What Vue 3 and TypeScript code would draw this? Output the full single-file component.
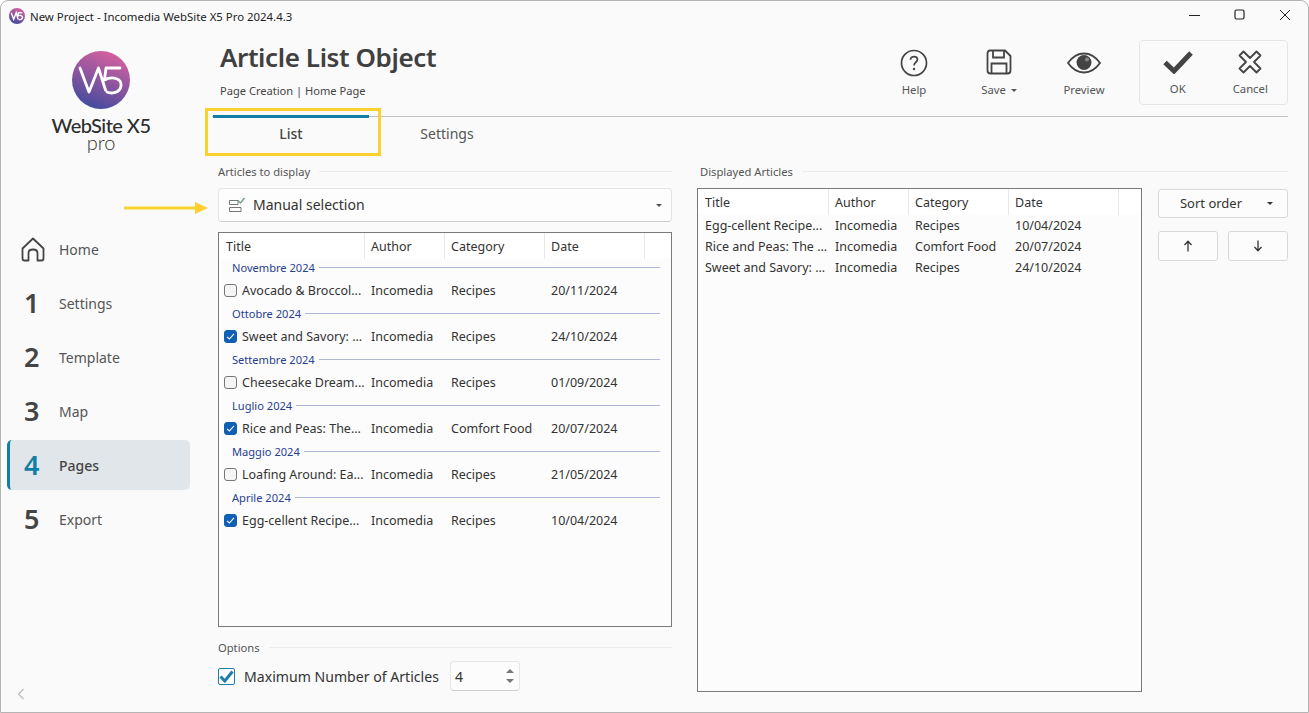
<script setup lang="ts">
const nav = [
  { n: '', label: 'Home' },
  { n: '1', label: 'Settings' },
  { n: '2', label: 'Template' },
  { n: '3', label: 'Map' },
  { n: '4', label: 'Pages', active: true },
  { n: '5', label: 'Export' },
]
const groups = [
  { month: 'Novembre 2024', title: 'Avocado & Broccol...', cat: 'Recipes', date: '20/11/2024', on: false },
  { month: 'Ottobre 2024', title: 'Sweet and Savory: ...', cat: 'Recipes', date: '24/10/2024', on: true },
  { month: 'Settembre 2024', title: 'Cheesecake Dream...', cat: 'Recipes', date: '01/09/2024', on: false },
  { month: 'Luglio 2024', title: 'Rice and Peas: The...', cat: 'Comfort Food', date: '20/07/2024', on: true },
  { month: 'Maggio 2024', title: 'Loafing Around: Ea...', cat: 'Recipes', date: '21/05/2024', on: false },
  { month: 'Aprile 2024', title: 'Egg-cellent Recipe...', cat: 'Recipes', date: '10/04/2024', on: true },
]
const shown = [
  { title: 'Egg-cellent Recipe...', cat: 'Recipes', date: '10/04/2024' },
  { title: 'Rice and Peas: The ...', cat: 'Comfort Food', date: '20/07/2024' },
  { title: 'Sweet and Savory: ...', cat: 'Recipes', date: '24/10/2024' },
]
</script>

<template>
  <div class="window">
    <header class="titlebar">
      <svg class="app-icon" viewBox="0 0 58 58">
        <defs>
          <linearGradient id="g1" x1="0.7" y1="0" x2="0.3" y2="1">
            <stop offset="0" stop-color="#d9619f" />
            <stop offset="1" stop-color="#3f4b9e" />
          </linearGradient>
        </defs>
        <circle cx="29" cy="29" r="29" fill="url(#g1)" />
        <path d="M8 17 17 41 26 17 33 41M48 17H34L32.500 29C40 25 50 27 49 35 48 42 39 43 35 41" fill="none" stroke="#fff" stroke-width="5" />
      </svg>
      <span class="title-text">New Project - Incomedia WebSite X5 Pro 2024.4.3</span>
      <div class="winctl">
        <svg width="12" height="12" viewBox="0 0 12 12"><path d="M0 6.500H11" stroke="#222" stroke-width="1.200" /></svg>
        <svg width="12" height="12" viewBox="0 0 12 12"><rect x="1" y="1" width="9" height="9" rx="1.500" fill="none" stroke="#222" stroke-width="1.200" /></svg>
        <svg width="12" height="12" viewBox="0 0 12 12"><path d="M1 1 11 11M11 1 1 11" stroke="#222" stroke-width="1" /></svg>
      </div>
    </header>

    <div class="body">
      <aside class="sidebar">
        <div class="logo">
          <svg class="logo-mark" viewBox="0 0 58 58">
            <defs>
              <linearGradient id="g2" x1="0.7" y1="0" x2="0.3" y2="1">
                <stop offset="0" stop-color="#d9619f" />
                <stop offset="1" stop-color="#3f4b9e" />
              </linearGradient>
            </defs>
            <circle cx="29" cy="29" r="29" fill="url(#g2)" />
            <path d="M8 17 17 41 26.500 17 33.500 39M48 17H34L32.500 29C40 25 50 27 49 35 48 42 39 43 35 41" fill="none" stroke="#fff" stroke-width="2.800" stroke-linecap="round" stroke-linejoin="round" />
          </svg>
          <div class="logo-name">WebSite X5</div>
          <div class="logo-pro">pro</div>
        </div>
        <nav class="nav">
          <div v-for="item in nav" :key="item.label" class="nav-item" :class="{ active: item.active }">
            <span class="nav-num">
              <svg v-if="!item.n" class="home" width="24" height="25" viewBox="0 0 24 25">
                <path d="M1.500 11.500 12 1.500 22.500 11.500V21.500Q22.500 23.500 20.500 23.500H16.500V16Q16.500 12.500 12 12.500 7.500 12.500 7.500 16V23.500H3.500Q1.500 23.500 1.500 21.500Z" fill="none" stroke="#444" stroke-width="1.800" stroke-linejoin="round" />
              </svg>
              <template v-else>{{ item.n }}</template>
            </span>
            <span class="nav-label">{{ item.label }}</span>
          </div>
        </nav>
        <svg class="collapse" width="8" height="12" viewBox="0 0 8 12"><path d="M6.500 1 1.500 6 6.500 11" fill="none" stroke="#bdbdbd" stroke-width="1.300" /></svg>
      </aside>

      <main class="main">
        <div class="head">
          <div class="head-text">
            <h1>Article List Object</h1>
            <p>Page Creation | Home Page</p>
          </div>
          <div class="tools">
            <div class="tool help">
              <svg width="28" height="28" viewBox="0 0 28 28"><circle cx="14" cy="14" r="12.500" fill="none" stroke="#444" stroke-width="1.700" /><path d="M10.500 10.800C10.500 8.800 12 7.600 14 7.600 16 7.600 17.500 8.900 17.500 10.600 17.500 13.200 14 13.400 14 16.500" fill="none" stroke="#444" stroke-width="1.700" /><circle cx="14" cy="20" r="1.200" fill="#444" /></svg>
              <span>Help</span>
            </div>
            <div class="tool save">
              <svg width="26" height="26" viewBox="0 0 26 26"><path d="M4 1.500H19L24.500 7V21.500Q24.500 24.500 21.500 24.500H4.500Q1.500 24.500 1.500 21.500V4.500Q1.500 1.500 4 1.500Z" fill="none" stroke="#444" stroke-width="1.800" stroke-linejoin="round" /><path d="M7 2V8.500H18V2M5.500 24V14.500H20.500V24" fill="none" stroke="#444" stroke-width="1.800" /></svg>
              <span>Save <i class="caret"></i></span>
            </div>
            <div class="tool preview">
              <svg width="34" height="22" viewBox="0 0 34 22"><path d="M1 11C6 4 11 1.500 17 1.500S28 4 33 11C28 18 23 20.500 17 20.500S6 18 1 11Z" fill="none" stroke="#444" stroke-width="1.800" /><circle cx="17" cy="10.500" r="7.500" fill="#444" /><circle cx="20" cy="7.500" r="2" fill="#888" /></svg>
              <span>Preview</span>
            </div>
            <div class="confirm">
              <div class="tool ok">
                <svg width="30" height="24" viewBox="0 0 30 24"><path d="M2 12.500 11 21 28 3" fill="none" stroke="#444" stroke-width="5" /></svg>
                <span>OK</span>
              </div>
              <div class="tool cancel">
                <svg width="24" height="24" viewBox="0 0 24 24"><path d="M5.500 1.500 12 8 18.500 1.500 22.500 5.500 16 12 22.500 18.500 18.500 22.500 12 16 5.500 22.500 1.500 18.500 8 12 1.500 5.500Z" fill="none" stroke="#444" stroke-width="1.800" stroke-linejoin="round" /></svg>
                <span>Cancel</span>
              </div>
            </div>
          </div>
        </div>

        <div class="tabs">
          <div class="tab on">List</div>
          <div class="tab">Settings</div>
        </div>

        <div class="columns">
          <section class="left">
            <div class="legend"><span>Articles to display</span><i></i></div>
            <div class="select">
              <svg width="18" height="16" viewBox="0 0 18 16"><path d="M1.500 3.500H10V7.500H1.500ZM1.500 10.500H13V14.500H1.500Z" fill="none" stroke="#777" stroke-width="1" /><path d="M10 3.500 12.500 6 16.500 1" fill="none" stroke="#7d9d8a" stroke-width="1.500" /></svg>
              <span class="select-text">Manual selection</span>
              <i class="caret"></i>
            </div>
            <div class="list left-list">
              <div class="cols">
                <div class="c1">Title</div><div class="c2">Author</div><div class="c3">Category</div><div class="c4">Date</div>
              </div>
              <template v-for="g in groups" :key="g.month">
                <div class="group"><span>{{ g.month }}</span><i></i></div>
                <div class="row">
                  <div class="c1 check-cell">
                    <span class="cb" :class="{ checked: g.on }">
                      <svg v-if="g.on" width="9" height="9" viewBox="0 0 9 9"><path d="M1 4.800 3.400 7 8 1.800" fill="none" stroke="#fff" stroke-width="1.100" /></svg>
                    </span>
                    <span class="nowrap">{{ g.title }}</span>
                  </div>
                  <div class="c2">Incomedia</div><div class="c3">{{ g.cat }}</div><div class="c4">{{ g.date }}</div>
                </div>
              </template>
            </div>
            <div class="legend options"><span>Options</span><i></i></div>
            <div class="max-row">
              <span class="big-cb">
                <svg width="15" height="15" viewBox="0 0 15 15"><path d="M1.500 7.500 5.800 12 13.500 2.500" fill="none" stroke="#1f7ea6" stroke-width="3" /></svg>
              </span>
              <span class="max-label">Maximum Number of Articles</span>
              <div class="spin">
                <span>4</span>
                <div class="arrows"><i class="up"></i><i class="down"></i></div>
              </div>
            </div>
          </section>

          <section class="right">
            <div class="legend shifted"><span>Displayed Articles</span><i></i></div>
            <div class="right-body">
              <div class="list right-list">
                <div class="cols">
                  <div class="d1">Title</div><div class="d2">Author</div><div class="d3">Category</div><div class="d4">Date</div>
                </div>
                <div v-for="s in shown" :key="s.date" class="row small">
                  <div class="d1 nowrap">{{ s.title }}</div><div class="d2">Incomedia</div><div class="d3">{{ s.cat }}</div><div class="d4">{{ s.date }}</div>
                </div>
              </div>
              <div class="side-btns">
                <div class="btn sort"><span>Sort order</span><i class="caret dark"></i></div>
                <div class="arrow-btns">
                  <div class="btn">
                    <svg width="10" height="12" viewBox="0 0 10 12"><path d="M5 11.500V1.500M1.500 5 5 1.200 8.500 5" fill="none" stroke="#333" stroke-width="1.300" /></svg>
                  </div>
                  <div class="btn">
                    <svg width="10" height="12" viewBox="0 0 10 12"><path d="M5 .5V10.500M1.500 7 5 10.800 8.500 7" fill="none" stroke="#333" stroke-width="1.300" /></svg>
                  </div>
                </div>
              </div>
            </div>
          </section>
        </div>
      </main>
    </div>

    <div class="mark-box"></div>
    <svg class="mark-arrow" width="84" height="12" viewBox="0 0 84 12"><path d="M0 6H72" stroke="#fbd12f" stroke-width="3" /><path d="M71 0 84 6 71 12Z" fill="#fbd12f" /></svg>
  </div>
</template>

<style>
html, body { margin: 0; background: #fff; }
</style>

<style scoped>
.window {
  position: relative;
  width: 1309px;
  height: 713px;
  box-sizing: border-box;
  overflow: hidden;
  display: flex;
  flex-direction: column;
  background: #fafafa;
  border: 1px solid #b4b4b4;
  border-radius: 8px 8px 0 0;
  color: #444;
  font-family: "Noto Sans", "Open Sans", sans-serif;
  font-size: 13px;
}
.titlebar {
  height: 30px;
  flex: none;
  display: flex;
  align-items: center;
  padding: 0 0 0 8px;
  box-sizing: border-box;
}
.app-icon { width: 16px; height: 16px; }
.title-text { margin-left: 5px; font-size: 11.400px; color: #222; }
.winctl { margin: -2px 0 0 auto; display: flex; gap: 33px; padding-right: 17px; align-items: center; }

.body { flex: 1; display: flex; min-height: 0; }
.sidebar {
  width: 206px;
  flex: none;
  display: flex;
  flex-direction: column;
  padding-left: 6px;
  box-sizing: border-box;
}
.logo {
  width: 190px;
  height: 180px;
  display: flex;
  flex-direction: column;
  align-items: center;
  padding: 20px 0 0 0;
  box-sizing: border-box;
  margin-left: 1px;
}
.logo-mark { width: 58px; height: 58px; flex: none; margin-left: -4px; }
.logo-name {
  font-family: Lato, sans-serif;
  font-weight: 500;
  font-size: 20px;
  line-height: 20px;
  letter-spacing: -0.550px;
  color: #2e2e2e;
  margin: 6px 0 0 -4px;
}
.logo-pro {
  font-family: Lato, sans-serif;
  font-weight: 300;
  font-size: 20px;
  line-height: 14px;
  color: #333;
  margin: 0 0 0 -4px;
}
.nav { display: flex; flex-direction: column; gap: 4px; margin-top: 13px; }
.nav-item {
  width: 183px;
  height: 50px;
  display: flex;
  align-items: center;
  box-sizing: border-box;
  border-radius: 5px;
  border-left: 3px solid transparent;
}
.nav-item.active { background: #e1e6ea; border-left-color: #117ea6; }
.nav-num {
  width: 46px;
  padding-left: 14px;
  box-sizing: border-box;
  font-size: 27px;
  font-weight: 600;
  color: #444;
  line-height: 30px;
  display: flex;
  align-items: center;
  flex: none;
}
.home { margin-left: -3px; flex: none; }
.nav-item.active .nav-num { color: #117ea6; }
.nav-label { font-size: 14px; color: #555; margin-left: 3px; }
.nav-item.active .nav-label { color: #444; font-weight: 500; }
.collapse { margin: auto 0 12px 10px; }

.main {
  flex: 1;
  min-width: 0;
  display: flex;
  flex-direction: column;
  padding: 0 20px 0 5px;
}
.head { height: 86px; flex: none; display: flex; justify-content: space-between; box-sizing: border-box; border-bottom: 1px solid #c2c2c2; }
.head-text { padding: 8px 0 0 8px; }
h1 { margin: 0; font-size: 26px; line-height: 37px; font-weight: 600; color: #404040; letter-spacing: -0.400px; }
.head-text p { margin: 7px 0 0; font-size: 11.100px; line-height: 16px; color: #444; }
.tools { display: flex; align-items: flex-start; padding-top: 9px; }
.tool {
  display: flex;
  flex-direction: column;
  align-items: center;
  font-size: 11.300px;
  color: #555;
  height: 64px;
  box-sizing: border-box;
}
.tool svg { flex: none; }
.tool span { line-height: 16px; white-space: nowrap; }
.help { width: 60px; padding-top: 9px; margin-right: 25px; gap: 5px; }
.save { width: 60px; padding-top: 9px; margin-right: 25px; gap: 7px; }
.preview { width: 60px; padding-top: 12px; margin-right: 25px; gap: 8px; }
.confirm {
  display: flex;
  width: 149px;
  height: 65px;
  box-sizing: border-box;
  border: 1px solid #e6e6e6;
  border-radius: 4px;
  padding: 0 2px 0 0;
  justify-content: space-between;
}
.ok { width: 76px; padding-top: 9px; gap: 7px; }
.cancel { width: 70px; padding-top: 9px; gap: 7px; }

.caret {
  display: inline-block;
  width: 0;
  height: 0;
  border-left: 3px solid transparent;
  border-right: 3px solid transparent;
  border-top: 3px solid #555;
  vertical-align: middle;
  margin-left: 2px;
}

.tabs { display: flex; height: 48px; flex: none; margin-top: -2px; padding-left: 1px; }
.tab {
  width: 156px;
  height: 31px;
  display: flex;
  align-items: center;
  justify-content: center;
  font-size: 14px;
  color: #555;
  border-top: 3px solid transparent;
  box-sizing: content-box;
}
.tab.on { border-top-color: #117ea6; font-weight: 500; color: #444; }

.columns { flex: 1; min-height: 0; display: flex; padding: 0 0 20px 6px; gap: 25px; }
.left { width: 454px; flex: none; display: flex; flex-direction: column; }
.right { flex: 1; min-width: 0; display: flex; flex-direction: column; }
.legend { display: flex; align-items: center; gap: 9px; height: 16px; font-size: 11.200px; color: #555; flex: none; }
.legend.shifted { padding-left: 3px; }
.legend span { white-space: nowrap; }
.legend i { flex: 1; height: 1px; background: #ececec; }
.select {
  height: 34px;
  flex: none;
  margin-top: 9px;
  box-sizing: border-box;
  background: #fdfdfd;
  border: 1px solid #e4e4e4;
  border-bottom-color: #cfcfcf;
  border-radius: 4px;
  display: flex;
  align-items: center;
  padding: 0 9px;
}
.select-text { margin: -2px 0 0 7px; font-size: 14px; color: #333; }
.select .caret { margin-left: auto; }
.list { background: #fff; border: 1px solid #7a7a7a; box-sizing: border-box; font-size: 12.500px; color: #333; }
.left-list { height: 395px; flex: none; margin-top: 10px; background: #fcfcfc; }
.cols { display: flex; height: 26px; background: #fff; align-items: flex-start; color: #333; }
.left-list .cols { margin-bottom: -3px; }
.cols > div { height: 26px; line-height: 28px; padding-left: 6px; box-sizing: border-box; border-right: 1px solid #e8e8e8; }
.cols > .c1, .cols > .d1, .row > .d1 { padding-left: 7px; }
.c1 { width: 146px; flex: none; }
.c2 { width: 80px; flex: none; }
.c3 { width: 100px; flex: none; }
.c4 { width: 100px; flex: none; }
.row { display: flex; height: 23px; align-items: center; }
.row > div { padding-left: 6px; box-sizing: border-box; white-space: nowrap; overflow: hidden; }
.row > .check-cell { padding-left: 5px; }
.group { display: flex; align-items: center; gap: 4px; height: 23px; margin: 0 11px 0 13px; font-size: 11.100px; color: #27408f; position: relative; }
.group i { flex: 1; height: 1px; background: #aeb7d6; }
.check-cell { display: flex; align-items: center; gap: 5px; }
.nowrap { white-space: nowrap; overflow: hidden; }
.cb {
  width: 13px;
  height: 13px;
  flex: none;
  box-sizing: border-box;
  border: 1px solid #777;
  border-radius: 3px;
  background: #f5f5f5;
  display: flex;
  align-items: center;
  justify-content: center;
}
.cb.checked { background: #0f5fb4; border-color: #0f5fb4; }
.options { margin-top: 12px; }
.max-row { display: flex; align-items: center; margin-top: 3px; height: 36px; flex: none; }
.big-cb {
  width: 17px;
  height: 17px;
  box-sizing: border-box;
  border: 1px solid #1f7ea6;
  border-radius: 2px;
  background: #fff;
  display: flex;
  align-items: center;
  justify-content: center;
}
.max-label { margin-left: 9px; font-size: 14.100px; color: #333; white-space: nowrap; }
.spin {
  margin-left: 11px;
  width: 70px;
  height: 30px;
  box-sizing: border-box;
  background: #fcfcfc;
  border: 1px solid #e6e6e6;
  border-bottom-color: #cfcfcf;
  border-radius: 4px;
  display: flex;
  align-items: center;
  justify-content: space-between;
  padding: 0 5px 0 4px;
  font-size: 14px;
  color: #333;
}
.arrows { display: flex; flex-direction: column; gap: 6px; }
.arrows i { width: 0; height: 0; border-left: 4px solid transparent; border-right: 4px solid transparent; }
.arrows .up { border-bottom: 4px solid #777; }
.arrows .down { border-top: 4px solid #777; }

.right-body { flex: 1; min-height: 0; display: flex; margin-top: 9px; gap: 16px; }
.right-list { width: 445px; flex: none; height: 504px; background: #fcfcfc; }
.d1 { width: 131px; flex: none; }
.d2 { width: 80px; flex: none; }
.d3 { width: 100px; flex: none; }
.d4 { width: 110px; flex: none; }
.row.small { height: 21px; }
.side-btns { flex: 1; min-width: 0; display: flex; flex-direction: column; gap: 13px; padding-top: 1px; }
.btn {
  height: 30px;
  box-sizing: border-box;
  background: #fcfcfc;
  border: 1px solid #d8d8d8;
  border-radius: 3px;
  display: flex;
  align-items: center;
  justify-content: center;
  flex: 1;
  font-size: 13px;
  color: #333;
}
.btn.sort { flex: none; height: 29px; position: relative; padding: 0 24px 2px 0; }
.sort .caret { position: absolute; right: 14px; top: 12px; }
.caret.dark { border-top-color: #333; }
.arrow-btns { display: flex; gap: 10px; }

.mark-box {
  position: absolute;
  left: 204px;
  top: 107px;
  width: 176px;
  height: 48px;
  box-sizing: border-box;
  border: 3px solid #fbd12f;
}
.mark-arrow { position: absolute; left: 123px; top: 201px; }
</style>
